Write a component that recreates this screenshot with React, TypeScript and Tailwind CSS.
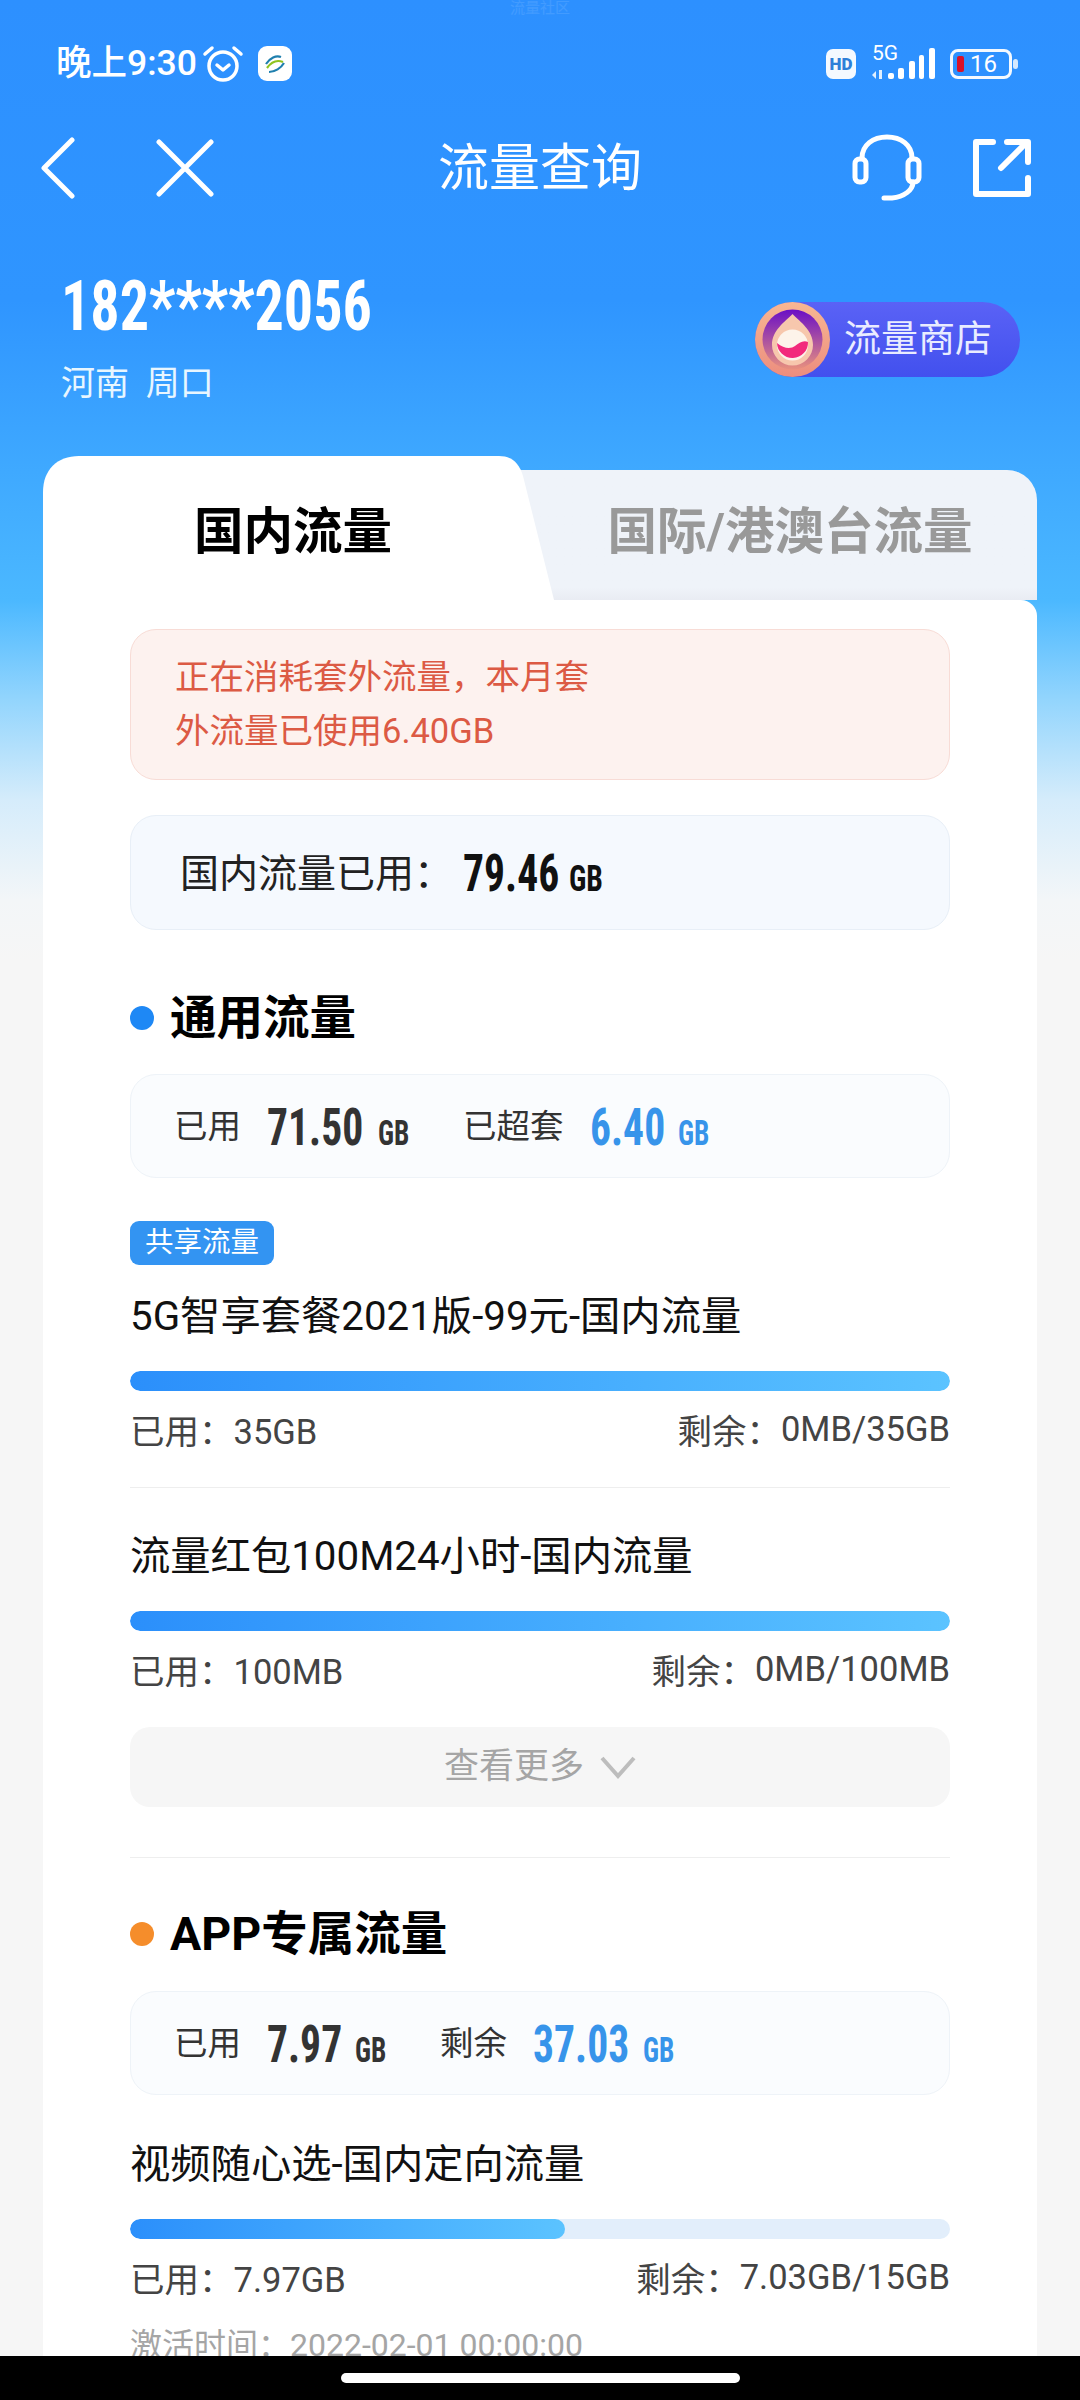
import React from "react";

const sans = 'Roboto, "Noto Sans CJK SC", "Noto Sans", sans-serif';
const narrow = '"Roboto Condensed", Roboto, "Liberation Sans", sans-serif';

function Bar({ percent }: { percent: number }) {
  return (
    <div className="h-[20px] w-full rounded-full bg-[#e2eefb] overflow-hidden">
      <div
        className="h-full rounded-full bg-gradient-to-r from-[#2b8ffb] to-[#5bc3ff]"
        style={{ width: `${percent}%` }}
      />
    </div>
  );
}

function Figure({ value, width, blue }: { value: string; width: string; blue?: boolean }) {
  return (
    <span className={blue ? "flex items-baseline text-[#3794ea]" : "flex items-baseline text-[#333]"} style={{ fontFamily: narrow }}>
      <span className={`${width} inline-block origin-left scale-x-[0.8] whitespace-nowrap text-[52px] font-bold`}>{value}</span>
      <span className="w-[30px] ml-[15px] inline-block origin-left scale-x-[0.78] text-[35px] font-bold">GB</span>
    </span>
  );
}

function Usage({ title, used, left, percent }: { title: string; used: string; left: string; percent: number }) {
  return (
    <div>
      <div className="text-[40.3px] leading-[56px] text-[#111]">{title}</div>
      <div className="mt-[26px]"><Bar percent={percent} /></div>
      <div className="mt-[17px] flex justify-between text-[34.5px] leading-[48px] text-[#444]">
        <span>已用：{used}</span>
        <span className="flex">
          <span>剩余：</span>
          <span className="-translate-y-[3px]">{left}</span>
        </span>
      </div>
    </div>
  );
}

function SectionTitle({ dot, text }: { dot: string; text: string }) {
  return (
    <div className="flex items-center gap-[16px]">
      <span className={dot} />
      <span className="text-[46.5px] leading-[64px] font-bold text-black">{text}</span>
    </div>
  );
}

function Summary({ children }: { children: React.ReactNode }) {
  return (
    <div className="h-[104px] rounded-[26px] border border-[#eef3f8] bg-[#fafcfe] flex items-center pl-[43px] pt-[3px] text-[33.5px] text-[#333]">
      {children}
    </div>
  );
}

export default function App() {
  return (
    <div
      className="relative w-[1080px] h-[2400px] overflow-hidden bg-[linear-gradient(180deg,#2d90ff_0px,#2f95ff_300px,#4bb8ff_600px,#93d5fd_700px,#d5ecfb_800px,#f3f6f8_900px,#f6f6f6_960px)]"
      style={{ fontFamily: sans }}
    >
      <span className="absolute left-[510px] top-0 text-[15px] leading-[16px] text-white/10">流量社区</span>

      {/* status bar */}
      <div className="h-[126px] flex items-center justify-between pl-[56px] pr-[62px] pt-[1px] text-white">
        <div className="flex items-center">
          <span className="text-[35.5px] font-medium">晚上9:30</span>
          <svg width="42" height="40" viewBox="0 0 42 40" className="ml-[5px]" fill="none" stroke="white" strokeWidth="3.5" strokeLinecap="round" strokeLinejoin="round">
            <circle cx="21" cy="22" r="14" />
            <path d="M15 21l6 5 6-5M3 10l7-6M39 10l-7-6" />
          </svg>
          <div className="ml-[14px] w-[34px] h-[35px] rounded-[9px] bg-white flex items-center justify-center">
            <svg width="24" height="24" viewBox="0 0 24 24" fill="none" strokeWidth="2.2">
              <path d="M3 12c4-6 10-9 15-7" stroke="#1f7fae" />
              <path d="M4 16c5-7 11-8 16-6" stroke="#8fc31f" />
              <path d="M6 20c6 0 12-4 15-9" stroke="#1f7fae" />
            </svg>
          </div>
        </div>
        <div className="flex items-center">
          <div className="w-[30px] h-[30px] rounded-[7px] bg-white/95 text-[#2d7fd8] text-[17px] font-black leading-[30px] text-center">HD</div>
          <div className="relative ml-[13px] w-[66px] h-[32px]">
            <span className="absolute left-[3px] top-[-7px] text-[21px] leading-[24px]">5G</span>
            <svg width="66" height="32" viewBox="0 0 66 32" fill="white" className="absolute left-0 top-0">
              <path d="M10 22h3v9h-3zM3 27l4-4v8z" opacity="0.85" />
              <rect x="19" y="25" width="6" height="6" rx="2" />
              <rect x="29" y="20" width="6" height="11" rx="2" />
              <rect x="40" y="13" width="6" height="18" rx="2" />
              <rect x="50" y="7" width="5" height="24" rx="2" />
              <rect x="60" y="0" width="6" height="31" rx="2" />
            </svg>
          </div>
          <div className="ml-[15px] w-[62px] h-[30px] rounded-[8px] border-[3px] border-white/95 flex items-center pl-[4px]">
            <span className="w-[7px] h-[16px] rounded-[2px] bg-[#d9122a]" />
            <span className="ml-[6px] text-[24px] leading-[24px]">16</span>
          </div>
          <span className="ml-[1px] w-[5px] h-[10px] rounded-full bg-white/80" />
        </div>
      </div>

      {/* navigation */}
      <div className="relative h-[84px] flex items-center justify-between pl-[41px] pr-[49px] text-white">
        <div className="flex items-center gap-[81px]">
          <svg width="34" height="62" viewBox="0 0 34 62" fill="none" stroke="white" strokeWidth="5" strokeLinecap="round" strokeLinejoin="round">
            <path d="M31 3L3 31l28 28" />
          </svg>
          <svg width="58" height="58" viewBox="0 0 58 58" fill="none" stroke="white" strokeWidth="5" strokeLinecap="round">
            <path d="M3 3l52 52M55 3L3 55" />
          </svg>
        </div>
        <span className="absolute left-0 right-0 top-[11px] text-center text-[51px] leading-[64px] pointer-events-none">流量查询</span>
        <div className="flex items-center gap-[51px]">
          <svg width="70" height="68" viewBox="0 0 70 68" fill="none" stroke="white" strokeWidth="5" strokeLinecap="round" strokeLinejoin="round">
            <path d="M10 24C10 11 21 3 35 3s25 8 25 21" />
            <rect x="3" y="25" width="11" height="23" rx="4.5" />
            <rect x="56" y="25" width="11" height="23" rx="4.5" />
            <path d="M61 48c0 8-9 15-21 16h-8" />
          </svg>
          <svg width="58" height="58" viewBox="0 0 58 58" fill="none" stroke="white" strokeWidth="6" strokeLinecap="round" strokeLinejoin="round">
            <path d="M20 3H3v52h52V39" />
            <path d="M28 29L54 3M34 3h21v20" />
          </svg>
        </div>
      </div>

      {/* account */}
      <div className="mt-[62px] h-[152px] flex justify-between pl-[61px] pr-[60px] text-white">
        <div>
          <div className="w-[308px] origin-left scale-x-[0.83] whitespace-nowrap text-[70px] leading-[68px] font-bold" style={{ fontFamily: narrow }}>182****2056</div>
          <div className="mt-[18px] text-[34px] leading-[50px] text-[#e8f6ff]">河南&nbsp;&nbsp;周口</div>
        </div>
        <div className="relative mt-[30px] w-[265px] h-[75px] rounded-full bg-gradient-to-b from-[#5a62f6] to-[#4250ee] flex items-center justify-end pr-[28px]">
          <svg width="75" height="75" viewBox="0 0 75 75" className="absolute left-0 top-0">
            <defs>
              <linearGradient id="ring" x1="0" y1="0" x2="0" y2="1">
                <stop offset="0" stopColor="#f8b793" />
                <stop offset="1" stopColor="#ec8d7e" />
              </linearGradient>
              <linearGradient id="disc" x1="0" y1="0" x2="0" y2="1">
                <stop offset="0" stopColor="#6a0fc6" />
                <stop offset="1" stopColor="#e8907e" />
              </linearGradient>
            </defs>
            <circle cx="37.5" cy="37.5" r="37.5" fill="url(#ring)" />
            <circle cx="37.5" cy="37.5" r="30" fill="url(#disc)" />
            <path d="M37.5 12C30 20 17 28 17 43a20.5 20.5 0 0 0 41 0C58 28 45 20 37.5 12z" fill="#f7c7ad" />
            <circle cx="37.5" cy="43" r="15.5" fill="#fdf3ea" />
            <path d="M22 41c7 6 14 6 18 3s8-6 13-4a15.5 15.5 0 1 1-31 1z" fill="#f22a7c" />
          </svg>
          <span className="text-[37px] text-[#e9ecff]">流量商店</span>
        </div>
      </div>

      {/* tabs */}
      <div className="mx-[43px] mt-[32px] relative h-[144px]">
        <div className="absolute right-0 top-[14px] w-[560px] h-[130px] rounded-t-[30px] bg-gradient-to-b from-[#eff3f9] from-90% to-[#e9ecf3]" />
        <svg width="512" height="144" viewBox="0 0 512 144" className="absolute left-0 top-0">
          <path d="M0 144V36C0 14 14 0 36 0h420c12 0 20 6 24 20l31 124z" fill="white" />
        </svg>
        <div className="absolute left-0 top-0 w-[500px] h-[144px] flex items-center justify-center pt-[8px] text-[49.5px] font-bold text-black">国内流量</div>
        <div className="absolute right-0 top-0 w-[494px] h-[144px] flex items-center justify-center pt-[8px] text-[49.5px] font-bold text-[#999]">国际/港澳台流量</div>
      </div>

      {/* main card */}
      <div className="mx-[43px] h-[1800px] bg-white rounded-tr-[16px] px-[87px] pt-[29px]">
        <div className="h-[151px] rounded-[26px] border border-[#f8dcd6] bg-[#fdf2ef] pl-[44px] pt-[20px] text-[34.5px] leading-[54px] text-[#dc5a44]">
          <div>正在消耗套外流量，本月套</div>
          <div>外流量已使用6.40GB</div>
        </div>
        <div className="mt-[35px] h-[115px] rounded-[26px] border border-[#e8eff7] bg-[#f5f9fe] flex items-center pl-[49px] pt-[3px] text-[39px] text-[#222]">
          <span>国内流量已用：</span>
          <span className="flex items-baseline font-bold text-[#111] ml-[10px]" style={{ fontFamily: narrow }}>
            <span className="w-[95px] inline-block origin-left scale-x-[0.8] whitespace-nowrap text-[52px]">79.46</span>
            <span className="w-[34px] ml-[11px] inline-block origin-left scale-x-[0.8] text-[37px]">GB</span>
          </span>
        </div>

        <div className="mt-[56px]">
          <SectionTitle dot="w-[24px] h-[24px] rounded-full bg-[#1e88f5]" text="通用流量" />
        </div>
        <div className="mt-[24px]">
          <Summary>
            <span>已用</span>
            <span className="ml-[26px]"><Figure value="71.50" width="w-[96px]" /></span>
            <span className="ml-[55px]">已超套</span>
            <span className="ml-[26px]"><Figure value="6.40" width="w-[73px]" blue /></span>
          </Summary>
        </div>

        <div className="mt-[43px] w-[144px] h-[44px] rounded-[9px] bg-[#3394f2] text-white text-[28.5px] leading-[44px] text-center">共享流量</div>
        <div className="mt-[24px]">
          <Usage title="5G智享套餐2021版-99元-国内流量" used="35GB" left="0MB/35GB" percent={100} />
        </div>
        <div className="mt-[31px] border-t border-[#eeeeee] pt-[41px]">
          <Usage title="流量红包100M24小时-国内流量" used="100MB" left="0MB/100MB" percent={100} />
        </div>
        <div className="mt-[31px] h-[80px] rounded-[20px] bg-[#f6f6f6] flex items-center justify-center text-[35px] text-[#a5a5a5]">
          <span>查看更多</span>
          <svg width="36" height="24" viewBox="0 0 36 24" fill="none" stroke="#bdbdbd" strokeWidth="4" className="ml-[16px]">
            <path d="M2 3l16 18L34 3" />
          </svg>
        </div>
        <div className="mt-[50px] border-t border-[#eeeeee] pt-[44px]">
          <SectionTitle dot="w-[24px] h-[24px] rounded-full bg-[#f58d2b]" text="APP专属流量" />
        </div>
        <div className="mt-[25px]">
          <Summary>
            <span>已用</span>
            <span className="ml-[26px]"><Figure value="7.97" width="w-[73px]" /></span>
            <span className="ml-[55px]">剩余</span>
            <span className="ml-[26px]"><Figure value="37.03" width="w-[95px]" blue /></span>
          </Summary>
        </div>
        <div className="mt-[42px]">
          <Usage title="视频随心选-国内定向流量" used="7.97GB" left="7.03GB/15GB" percent={53} />
        </div>
        <div className="mt-[17px] text-[32px] leading-[48px] text-[#a5a5a5]">激活时间：2022-02-01 00:00:00</div>
      </div>

      {/* gesture bar */}
      <div className="absolute left-0 right-0 bottom-0 h-[44px] bg-black flex justify-center pt-[17px]">
        <div className="w-[399px] h-[10px] rounded-full bg-white" />
      </div>
    </div>
  );
}
